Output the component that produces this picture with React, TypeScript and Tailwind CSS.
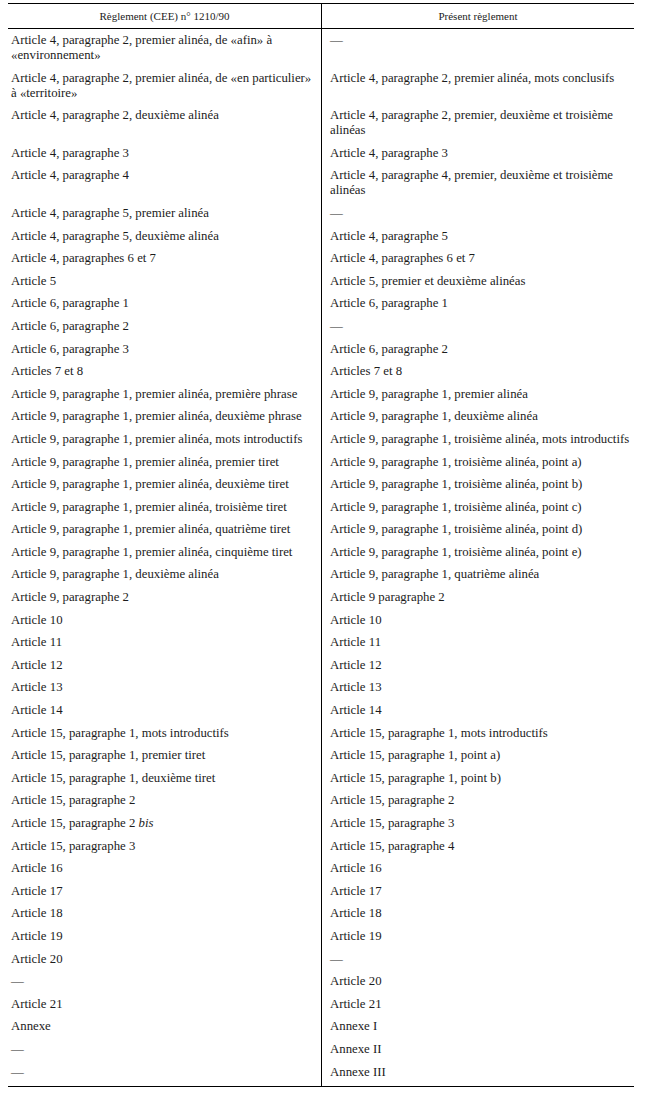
import React from "react";

type Cell = React.ReactNode;

const DASH = "—";

// correlation table rows: [règlement (CEE) n° 1210/90, présent règlement]
const rows: [Cell, Cell][] = [
  [
    <>
      Article 4, paragraphe 2, premier alinéa, de «afin» à
      <br />
      «environnement»
    </>,
    DASH,
  ],
  [
    <>
      Article 4, paragraphe 2, premier alinéa, de «en particulier»
      <br />à «territoire»
    </>,
    "Article 4, paragraphe 2, premier alinéa, mots conclusifs",
  ],
  [
    "Article 4, paragraphe 2, deuxième alinéa",
    <>
      Article 4, paragraphe 2, premier, deuxième et troisième
      <br />
      alinéas
    </>,
  ],
  ["Article 4, paragraphe 3", "Article 4, paragraphe 3"],
  [
    "Article 4, paragraphe 4",
    <>
      Article 4, paragraphe 4, premier, deuxième et troisième
      <br />
      alinéas
    </>,
  ],
  ["Article 4, paragraphe 5, premier alinéa", DASH],
  ["Article 4, paragraphe 5, deuxième alinéa", "Article 4, paragraphe 5"],
  ["Article 4, paragraphes 6 et 7", "Article 4, paragraphes 6 et 7"],
  ["Article 5", "Article 5, premier et deuxième alinéas"],
  ["Article 6, paragraphe 1", "Article 6, paragraphe 1"],
  ["Article 6, paragraphe 2", DASH],
  ["Article 6, paragraphe 3", "Article 6, paragraphe 2"],
  ["Articles 7 et 8", "Articles 7 et 8"],
  [
    "Article 9, paragraphe 1, premier alinéa, première phrase",
    "Article 9, paragraphe 1, premier alinéa",
  ],
  [
    "Article 9, paragraphe 1, premier alinéa, deuxième phrase",
    "Article 9, paragraphe 1, deuxième alinéa",
  ],
  [
    "Article 9, paragraphe 1, premier alinéa, mots introductifs",
    "Article 9, paragraphe 1, troisième alinéa, mots introductifs",
  ],
  [
    "Article 9, paragraphe 1, premier alinéa, premier tiret",
    "Article 9, paragraphe 1, troisième alinéa, point a)",
  ],
  [
    "Article 9, paragraphe 1, premier alinéa, deuxième tiret",
    "Article 9, paragraphe 1, troisième alinéa, point b)",
  ],
  [
    "Article 9, paragraphe 1, premier alinéa, troisième tiret",
    "Article 9, paragraphe 1, troisième alinéa, point c)",
  ],
  [
    "Article 9, paragraphe 1, premier alinéa, quatrième tiret",
    "Article 9, paragraphe 1, troisième alinéa, point d)",
  ],
  [
    "Article 9, paragraphe 1, premier alinéa, cinquième tiret",
    "Article 9, paragraphe 1, troisième alinéa, point e)",
  ],
  [
    "Article 9, paragraphe 1, deuxième alinéa",
    "Article 9, paragraphe 1, quatrième alinéa",
  ],
  ["Article 9, paragraphe 2", "Article 9 paragraphe 2"],
  ["Article 10", "Article 10"],
  ["Article 11", "Article 11"],
  ["Article 12", "Article 12"],
  ["Article 13", "Article 13"],
  ["Article 14", "Article 14"],
  [
    "Article 15, paragraphe 1, mots introductifs",
    "Article 15, paragraphe 1, mots introductifs",
  ],
  [
    "Article 15, paragraphe 1, premier tiret",
    "Article 15, paragraphe 1, point a)",
  ],
  [
    "Article 15, paragraphe 1, deuxième tiret",
    "Article 15, paragraphe 1, point b)",
  ],
  ["Article 15, paragraphe 2", "Article 15, paragraphe 2"],
  [
    <>
      Article 15, paragraphe 2 <i>bis</i>
    </>,
    "Article 15, paragraphe 3",
  ],
  ["Article 15, paragraphe 3", "Article 15, paragraphe 4"],
  ["Article 16", "Article 16"],
  ["Article 17", "Article 17"],
  ["Article 18", "Article 18"],
  ["Article 19", "Article 19"],
  ["Article 20", DASH],
  [DASH, "Article 20"],
  ["Article 21", "Article 21"],
  ["Annexe", "Annexe I"],
  [DASH, "Annexe II"],
  [DASH, "Annexe III"],
];

export default function App() {
  return (
    <div className="min-h-[1101px] bg-white pt-[3px] font-['Liberation_Serif',serif] text-[#1c1c1c]">
      <div className="ml-[8px] w-[626px] border-y border-black">
        <div className="grid grid-cols-[314px_1fr]">
          {/* HEADER */}
          <div className="flex h-[25px] items-center justify-center border-r border-b border-black text-[11px]">
            Règlement (CEE) n° 1210/90
          </div>
          <div className="flex h-[25px] items-center justify-center border-b border-black text-[11px]">
            Présent règlement
          </div>

          {/* BODY */}
          {rows.map(([left, right], i) => (
            <React.Fragment key={i}>
              <div className="border-r border-black pl-[3px] pt-[4px] pb-[3.6px] text-[12.8px] leading-[15px] whitespace-nowrap last-of-type:pb-[6.6px]">
                {left}
              </div>
              <div className="pl-[8px] pt-[4px] pb-[3.6px] text-[12.8px] leading-[15px] whitespace-nowrap last:pb-[6.6px]">
                {right}
              </div>
            </React.Fragment>
          ))}
        </div>
      </div>
    </div>
  );
}
